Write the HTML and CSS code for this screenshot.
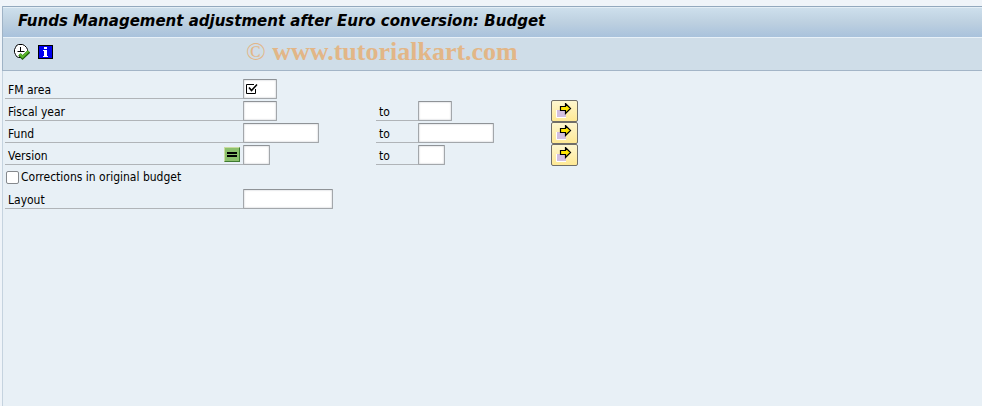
FILE: index.html
```html
<!DOCTYPE html>
<html lang="en">
<head>
    <meta charset="UTF-8">
    <meta name="viewport" content="width=device-width, initial-scale=1.0">
    <title>Funds Management adjustment after Euro conversion: Budget</title>
    <link rel="stylesheet" href="styles.css">
</head>
<body>
    <div class="window">
        <header>
            <h1>Funds Management adjustment after Euro conversion: Budget</h1>
            <div class="toolbar">
                <button type="submit" form="selection-form" class="tool" aria-label="Execute">
                    <svg width="16" height="16" viewBox="0 0 16 16">
                        <path d="M4.500 .5h4l2 1l2 2l1 2v3l-1 2l-2 2l-2 1h-4l-2-1l-1-2l-1-2v-3l1-2l1-2z" fill="#fff" stroke="#000"/>
                        <path d="M6.500 3v5M3.500 7.500h7" fill="none" stroke="#000"/>
                        <path d="M5.500 10.500L8.500 13.500L15 7.500" fill="none" stroke="#1d5c0c" stroke-width="3.600"/>
                        <path d="M5.500 10L8.500 13L14.500 7" fill="none" stroke="#5cb82c" stroke-width="2.200"/>
                    </svg>
                </button>
                <button type="button" class="tool" aria-label="Information">
                    <svg width="16" height="16" viewBox="0 0 16 16" shape-rendering="crispEdges">
                        <path d="M0 1h15v14H0z" fill="#000"/>
                        <path d="M1 2h13v12H1z" fill="#0000f0"/>
                        <path d="M6 3h3v2H6zM5 6h4v6h1v1H5v-1h1V7H5z" fill="#fff"/>
                    </svg>
                </button>
                <span class="watermark"><span class="copy">©</span> www.tutorialkart.com</span>
            </div>
        </header>

        <form id="selection-form">
            <div class="row">
                <label class="name" for="fm-area">FM area</label>
                <div class="field required">
                    <input type="text" id="fm-area" class="w-year" required>
                    <svg width="12" height="12" viewBox="0 0 12 12">
                        <path d="M8 1.500H.5v9h9V6" fill="none" stroke="#000"/>
                        <path d="M3 4.500L5.500 7.500L11 1.500" fill="none" stroke="#000" stroke-width="1.500"/>
                    </svg>
                </div>
            </div>
            <div class="row">
                <label class="name" for="year-from">Fiscal year</label>
                <div class="field"><input type="text" id="year-from" class="w-year"></div>
                <label class="to" for="year-to">to</label>
                <div class="field"><input type="text" id="year-to" class="w-year"></div>
                <button type="button" class="more" aria-label="Multiple selection for fiscal year">
                    <svg width="16" height="16" viewBox="0 0 16 16"><use href="#arrow"/></svg>
                </button>
            </div>
            <div class="row">
                <label class="name" for="fund-from">Fund</label>
                <div class="field"><input type="text" id="fund-from" class="w-fund"></div>
                <label class="to" for="fund-to">to</label>
                <div class="field"><input type="text" id="fund-to" class="w-fund"></div>
                <button type="button" class="more" aria-label="Multiple selection for fund">
                    <svg width="16" height="16" viewBox="0 0 16 16"><use href="#arrow"/></svg>
                </button>
            </div>
            <div class="row">
                <div class="name">
                    <label for="version-from">Version</label>
                    <button type="button" class="equal" aria-label="Single value">
                        <svg width="10" height="5" viewBox="0 0 10 5"><path d="M0 0h10v2H0zM0 3h10v2H0z"/></svg>
                    </button>
                </div>
                <div class="field"><input type="text" id="version-from" class="w-version"></div>
                <label class="to" for="version-to">to</label>
                <div class="field"><input type="text" id="version-to" class="w-version"></div>
                <button type="button" class="more" aria-label="Multiple selection for version">
                    <svg width="16" height="16" viewBox="0 0 16 16"><use href="#arrow"/></svg>
                </button>
            </div>
            <div class="check">
                <input type="checkbox" id="corrections">
                <label for="corrections">Corrections in original budget</label>
            </div>
            <div class="row">
                <label class="name" for="layout">Layout</label>
                <div class="field"><input type="text" id="layout" class="w-layout"></div>
            </div>
        </form>
    </div>

    <!-- Shared arrow icon -->
    <svg class="defs" width="0" height="0">
        <symbol id="arrow" viewBox="0 0 16 16">
            <path d="M1 7h9v7H1z" fill="#d3bfe0"/>
            <path d="M.5 7v7.500H10" fill="none" stroke="#fff"/>
            <path d="M4.500 3.500h5V.5L14.500 5.500L9.500 10.500V7.500h-5z" fill="#ffe600" stroke="#000" stroke-width="1.200"/>
        </symbol>
    </svg>
</body>
</html>
```

FILE: styles.css
```css
* {
    box-sizing: border-box;
}
body {
    margin: 0;
    padding: 6px 0 0 2px;
    min-height: 100vh;
    display: flex;
    background-color: #eff4f9;
    font-family: "DejaVu Sans Condensed", "DejaVu Sans", sans-serif;
    font-size: 12px;
    color: #000;
}
.window {
    flex: 1;
    border-left: 1px solid #c5d3df;
    background-color: #e8f0f6;
}
header {
    border-top: 1px solid #93a9be;
    border-bottom: 1px solid #a3b5c7;
    box-shadow: -1px 0 0 #9fb3c6;
}
h1 {
    margin: 0;
    padding: 0 15px;
    height: 30px;
    line-height: 26px;
    border-top: 1px solid #e3eef6;
    background: linear-gradient(#cddfec, #bdd0e0 50%, #a9c2dc);
    font-family: "DejaVu Sans", sans-serif;
    font-size: 15px;
    font-style: italic;
    font-weight: bold;
}
.toolbar {
    display: flex;
    align-items: center;
    gap: 8px;
    height: 33px;
    padding: 0 11px 4px;
    border-top: 1px solid #e8f1f8;
    background-color: #cfdde8;
}
button {
    padding: 0;
    border: none;
    cursor: pointer;
}
button svg {
    display: block;
}
.tool {
    background: none;
}
.watermark {
    margin-left: 184px;
    font-family: "Liberation Serif", serif;
    font-size: 26px;
    line-height: 28px;
    font-weight: bold;
    color: #e2b687;
}
.copy {
    font-weight: normal;
}
form {
    padding: 7px 2px;
}
.row {
    display: grid;
    grid-template-columns: 238px 133px 42px 133px 27px;
    height: 22px;
    align-items: center;
}
.name, .to {
    height: 20px;
    padding-left: 3px;
    line-height: 23px;
    border-bottom: 1px solid #b0b4b8;
}
div.name {
    display: flex;
    justify-content: space-between;
    padding-right: 3px;
}
.field {
    position: relative;
    height: 20px;
}
.field input {
    display: block;
    height: 20px;
    padding: 0 3px;
    border: 1px solid #a3a7ab;
    border-top-color: #8f9397;
    border-radius: 1px;
    background-color: #fff;
    box-shadow: inset 0 0 2px #b8bcc0;
    font: inherit;
}
.w-version {
    width: 27px;
}
.w-year {
    width: 34px;
}
.w-fund {
    width: 76px;
}
.w-layout {
    width: 90px;
}
.required svg {
    position: absolute;
    left: 3px;
    top: 4px;
}
.equal {
    display: flex;
    align-items: center;
    justify-content: center;
    width: 16px;
    height: 15px;
    margin-top: 2px;
    border: 1px solid #3f7a32;
    border-top-color: #c9dca0;
    border-left-color: #c9dca0;
    background-color: #8cc06c;
}
.more {
    display: flex;
    height: 22px;
    padding: 2px 4px;
    border: 1px solid #706e68;
    border-radius: 2px;
    background: linear-gradient(#fdf6cf, #ffe994);
}
.check {
    display: flex;
    align-items: center;
    gap: 2px;
    height: 22px;
    line-height: 24px;
}
.check input {
    appearance: none;
    width: 13px;
    height: 13px;
    margin: 0 0 0 1px;
    border: 1px solid #85898d;
    border-radius: 2px;
    background-color: #fff;
}
.check input:checked {
    background-color: #5c88b4;
}
.defs {
    position: absolute;
}
```
